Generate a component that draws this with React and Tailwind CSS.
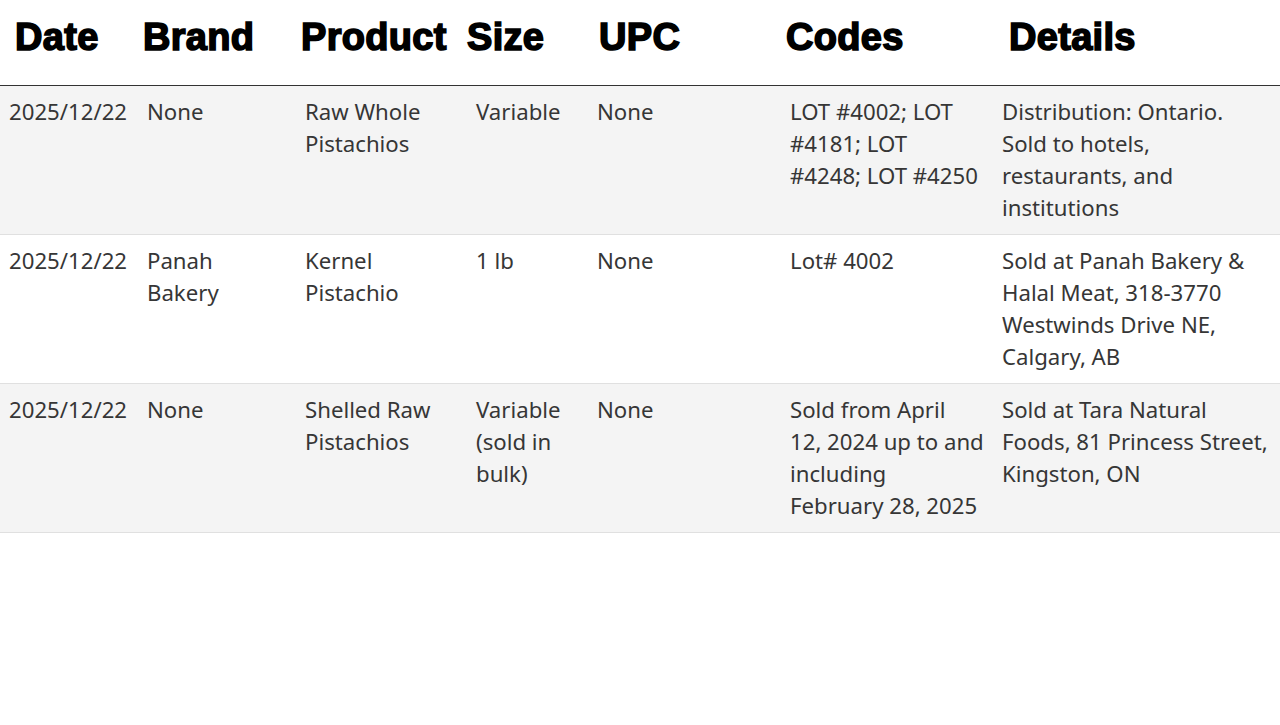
const rows = [
  {
    date: '2025/12/22',
    brand: 'None',
    product: 'Raw Whole Pistachios',
    size: 'Variable',
    upc: 'None',
    codes: 'LOT #4002; LOT #4181; LOT\n#4248; LOT #4250',
    details: 'Distribution: Ontario. Sold to hotels, restaurants, and institutions',
  },
  {
    date: '2025/12/22',
    brand: 'Panah Bakery',
    product: 'Kernel Pistachio',
    size: '1 lb',
    upc: 'None',
    codes: 'Lot# 4002',
    details: 'Sold at Panah Bakery & Halal Meat, 318-3770 Westwinds Drive NE, Calgary, AB',
  },
  {
    date: '2025/12/22',
    brand: 'None',
    product: 'Shelled Raw Pistachios',
    size: 'Variable (sold in bulk)',
    upc: 'None',
    codes: 'Sold from April\n12, 2024 up to and\nincluding\nFebruary 28, 2025',
    details: 'Sold at Tara Natural Foods, 81 Princess Street, Kingston, ON',
  },
];

const headers = [
  { label: 'Date', pad: 'pl-[15px]' },
  { label: 'Brand', pad: 'pl-[5px]' },
  { label: 'Product', pad: 'pl-[5px]' },
  { label: 'Size', pad: 'pl-0' },
  { label: 'UPC', pad: 'pl-[11px]' },
  { label: 'Codes', pad: 'pl-[5px]' },
  { label: 'Details', pad: 'pl-[16px]' },
];

const fields = ['date', 'brand', 'product', 'size', 'upc', 'codes', 'details'];

export default function App() {
  return (
    <div className="min-h-[725px] w-[1280px] bg-white">
      <table className="w-full table-fixed border-collapse">
        <colgroup>
          <col className="w-[138px]" />
          <col className="w-[158px]" />
          <col className="w-[171px]" />
          <col className="w-[121px]" />
          <col className="w-[193px]" />
          <col className="w-[212px]" />
          <col className="w-[287px]" />
        </colgroup>
        <thead>
          <tr className="h-[85px] border-b border-[#333]">
            {headers.map((h) => (
              <th
                key={h.label}
                className={`${h.pad} pt-[15px] pb-[26px] text-left align-top whitespace-nowrap font-['Liberation_Sans',Arial,sans-serif] text-[38px] leading-[44px] font-bold tracking-[0.3px] text-black [-webkit-text-stroke:1.6px_black]`}
              >
                {h.label}
              </th>
            ))}
          </tr>
        </thead>
        <tbody className="font-['Noto_Sans',sans-serif] text-[22.2px] leading-[32px] text-[#363636]">
          {rows.map((r, i) => (
            <tr
              key={i}
              className={`border-b border-[#e0e0e0] ${i % 2 === 0 ? 'bg-[#f4f4f4]' : 'bg-white'}`}
            >
              {fields.map((f) => (
                <td
                  key={f}
                  className={`pl-[9px] ${f === 'codes' ? 'pr-[5px]' : 'pr-[9px]'} pt-[10px] pb-[10px] align-top whitespace-pre-line`}
                >
                  {r[f]}
                </td>
              ))}
            </tr>
          ))}
        </tbody>
      </table>
    </div>
  );
}
